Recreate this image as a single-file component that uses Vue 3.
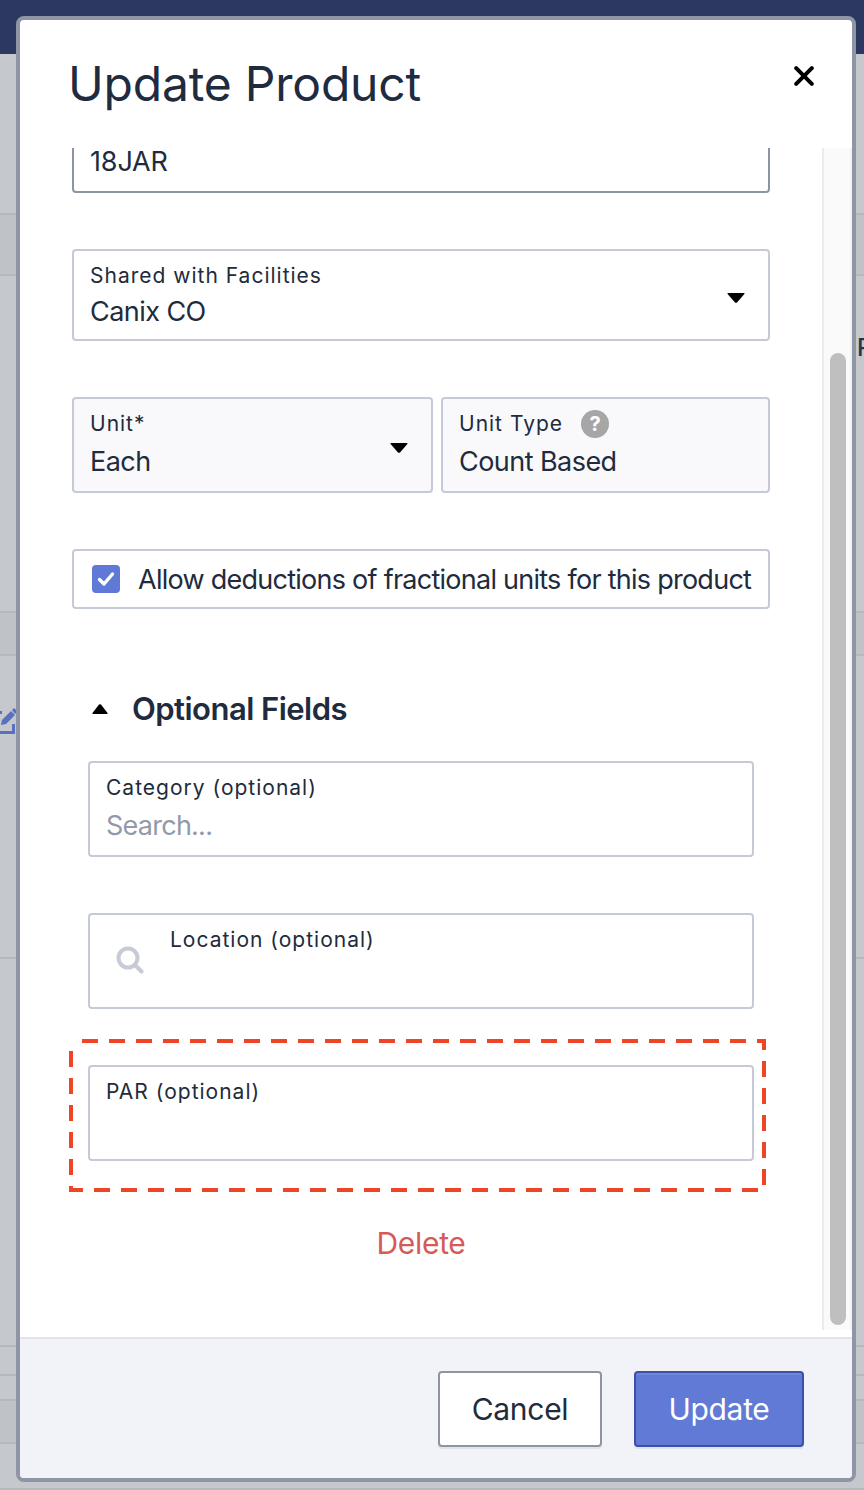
<script setup>
const bands = [
  { h: 161, cls: '' },
  { h: 61, cls: 'band' },
  { h: 337, cls: 'ptext' },
  { h: 43, cls: 'band' },
  { h: 303, cls: 'edit' },
  { h: 388, cls: 'rightline' },
  { h: 29, cls: 'rightline' },
  { h: 25, cls: '' },
  { h: 43, cls: 'band' },
  { h: 46, cls: '' }
]
</script>

<template>
  <div class="page">
    <div class="topbar"></div>
    <div v-for="(b, i) in bands" :key="i" class="bgrow" :class="b.cls" :style="{ height: b.h + 'px' }">
      <span v-if="b.cls === 'ptext'" class="ptext-letter">P</span>
      <svg v-if="b.cls === 'edit'" class="edit-icon" width="16" height="30" viewBox="0 0 16 30">
        <path d="M0 25h12v-7h3v10H0z" fill="#5b6fbf" />
        <path d="M0 5h2v3H0z" fill="#5b6fbf" />
        <path d="M1 19l1-5 9-9 4 4-9 9zM12 4l2-2 2 2v3l-1 1z" fill="#5b6fbf" />
      </svg>
    </div>

    <div class="modal">
      <header class="head">
        <h1>Update Product</h1>
        <svg class="close" width="20" height="20" viewBox="0 0 20 20">
          <path d="M2.2 2.2l15.6 15.6M17.8 2.2L2.2 17.8" stroke="#000" stroke-width="4" stroke-linecap="round" />
        </svg>
      </header>

      <div class="main">
        <div class="scroll">
          <div class="field clipped"><div class="label">&nbsp;</div><div class="value">18JAR</div></div>

          <div class="field shared">
            <div class="grow">
              <div class="label">Shared with Facilities</div>
              <div class="value">Canix CO</div>
            </div>
            <svg class="caret" width="18" height="10" viewBox="0 0 18 10"><path d="M1 0h16q1 0 .4 1L10 9.4q-1 .9-2 0L.6 1Q0 0 1 0z" fill="#000" /></svg>
          </div>

          <div class="unit-row">
            <div class="field tinted unit">
              <div class="grow">
                <div class="label">Unit*</div>
                <div class="value">Each</div>
              </div>
              <svg class="caret" width="18" height="10" viewBox="0 0 18 10"><path d="M1 0h16q1 0 .4 1L10 9.4q-1 .9-2 0L.6 1Q0 0 1 0z" fill="#000" /></svg>
            </div>
            <div class="field tinted unit-type">
              <div class="label with-help">Unit Type <span class="help">?</span></div>
              <div class="value">Count Based</div>
            </div>
          </div>

          <div class="field check-row">
            <span class="check">
              <svg width="20" height="18" viewBox="0 0 20 18"><path d="M3.5 9.5l4.5 4.5L16.5 4" fill="none" stroke="#fff" stroke-width="3.4" stroke-linecap="round" stroke-linejoin="round" /></svg>
            </span>
            <span class="check-text">Allow deductions of fractional units for this product</span>
          </div>

          <div class="opt-head">
            <svg width="16" height="10" viewBox="0 0 16 10"><path d="M1 10h14q1 0 .5-1L9 .6q-1-.9-2 0L.5 9Q0 10 1 10z" fill="#000" /></svg>
            <h2>Optional Fields</h2>
          </div>

          <div class="optional">
            <div class="field">
              <div class="label">Category (optional)</div>
              <div class="value placeholder">Search...</div>
            </div>
            <div class="field location">
              <svg class="search" width="28" height="28" viewBox="0 0 28 28">
                <circle cx="12" cy="12" r="9.5" fill="none" stroke="#c6cbd6" stroke-width="4" />
                <path d="M19.5 19.5l6 6" stroke="#c6cbd6" stroke-width="4" stroke-linecap="round" />
              </svg>
              <div class="label">Location (optional)</div>
            </div>
            <div class="par-wrap">
              <div class="field">
                <div class="label">PAR (optional)</div>
              </div>
              <svg class="dashes" width="697" height="153" viewBox="0 0 697 153">
                <rect x="2" y="2" width="693" height="149" fill="none" stroke="#ee4526" stroke-width="4" stroke-dasharray="16 11" stroke-dashoffset="16" />
              </svg>
            </div>
          </div>

          <div class="delete">Delete</div>
        </div>
        <div class="track"><div class="thumb"></div></div>
      </div>

      <footer class="foot">
        <button class="btn cancel">Cancel</button>
        <button class="btn update">Update</button>
      </footer>
    </div>
  </div>
</template>

<style scoped>
.page {
  position: relative;
  width: 864px;
  height: 1490px;
  overflow: hidden;
  background: #c5c8cd;
  font-family: Inter, "Liberation Sans", sans-serif;
  color: #212b3c;
}
.topbar { height: 54px; background: #2c3860; }
.bgrow { box-sizing: border-box; position: relative; border-bottom: 2px solid #b5b8bd; overflow: hidden; }
.bgrow.band { background: #bfc2c7; }
.bgrow:last-of-type { border-bottom: 0; }
.ptext { padding: 57px 0 0 857px; }
.ptext-letter { font-size: 24px; font-weight: 500; color: #2b3444; }
.edit-icon { display: block; margin-top: 50px; }

.modal {
  position: absolute;
  left: 16px;
  top: 16px;
  width: 840px;
  height: 1466px;
  box-sizing: border-box;
  border: 4px solid #8e96a5;
  border-radius: 8px;
  background: #fff;
  display: flex;
  flex-direction: column;
  overflow: hidden;
}
.head {
  height: 128px;
  flex: none;
  display: flex;
  justify-content: space-between;
  align-items: flex-start;
  padding: 0 38px 0 48px;
}
h1 {
  margin: 34px 0 0;
  font-size: 48px;
  line-height: 60px;
  font-weight: 400;
  letter-spacing: -0.2px;
  color: #212b3f;
}
.close { margin-top: 46px; }

.main { flex: 1; min-height: 0; display: flex; }
.scroll { width: 802px; box-sizing: border-box; padding: 0 52px; overflow: hidden; }

.field {
  box-sizing: border-box;
  height: 96px;
  border: 2px solid #c4cad8;
  border-radius: 4px;
  padding: 11px 16px 0;
  background: #fff;
}
.label { font-size: 21px; line-height: 28px; letter-spacing: 1px; color: #212b3c; }
.value { margin-top: 6px; font-size: 27px; line-height: 36px; letter-spacing: -0.55px; color: #212b3c; }
.placeholder { color: #929aa9; letter-spacing: -0.75px; }
.clipped { margin-top: -51px; border-color: #8d95a5; }
.clipped .value { letter-spacing: -0.15px; }
.shared { height: 92px; margin-top: 56px; display: flex; align-items: flex-start; justify-content: space-between; }
.shared .value { margin-top: 4px; }
.shared .caret { margin: 31px 7px 0 0; }
.grow { flex: 1; }
.caret { flex: none; }
.unit-row { display: flex; gap: 8px; margin-top: 56px; }
.tinted { background: #f9f9fb; }
.unit { width: 361px; display: flex; align-items: flex-start; }
.unit .caret { margin: 33px 7px 0 0; }
.unit-type { width: 329px; }
.with-help { display: flex; align-items: center; gap: 18px; height: 28px; }
.help {
  width: 28px;
  height: 28px;
  border-radius: 50%;
  background: #a6a6a6;
  color: #fff;
  font-size: 20px;
  font-weight: 700;
  letter-spacing: 0;
  line-height: 28px;
  text-align: center;
}
.check-row {
  height: 60px;
  margin-top: 56px;
  padding: 0 0 0 18px;
  display: flex;
  align-items: center;
  gap: 18px;
}
.check {
  width: 28px;
  height: 28px;
  flex: none;
  border-radius: 4px;
  background: #5f79d6;
  display: flex;
  align-items: center;
  justify-content: center;
}
.check-text { font-size: 27px; letter-spacing: -0.74px; white-space: nowrap; }
.opt-head {
  display: flex;
  align-items: center;
  gap: 24px;
  padding-left: 20px;
  margin-top: 80px;
  height: 40px;
}
h2 { margin: 0; font-size: 31px; line-height: 40px; font-weight: 600; letter-spacing: -0.53px; color: #212b3f; }
.optional { padding: 0 16px; margin-top: 32px; display: flex; flex-direction: column; gap: 56px; }
.location { display: flex; padding-left: 26px; gap: 26px; }
.search { margin-top: 20px; flex: none; }
.par-wrap { position: relative; }
.dashes { position: absolute; left: -19px; top: -26px; pointer-events: none; }
.delete { margin-top: 62px; text-align: center; font-size: 30px; line-height: 40px; letter-spacing: -0.3px; color: #d65a56; }

.track {
  width: 30px;
  height: 1182px;
  box-sizing: border-box;
  background: #fafafa;
  border-left: 2px solid #ececec;
  border-right: 2px solid #f2f2f2;
  padding-top: 205px;
}
.thumb { width: 16px; height: 972px; margin-left: 6px; background: #bfbfbf; border-radius: 8px; }

.foot {
  height: 141px;
  flex: none;
  box-sizing: border-box;
  border-top: 2px solid #e2e3e9;
  background: #f2f3f8;
  display: flex;
  justify-content: flex-end;
  gap: 32px;
  padding: 32px 48px 0 0;
}
.btn {
  height: 76px;
  box-sizing: border-box;
  border-radius: 4px;
  border: 2px solid;
  font: 400 30px Inter, "Liberation Sans", sans-serif;
  letter-spacing: -0.3px;
  padding: 0;
  box-shadow: 0 2px 0 #dfe3ea;
}
.cancel { width: 164px; background: #fff; border-color: #8d95a3; color: #212b3c; }
.update { width: 170px; background: #617ad6; border-color: #3f4fa5; color: #fff; box-shadow: inset 0 2px 0 #6f87dd, 0 2px 0 #dfe3ea; }
</style>
